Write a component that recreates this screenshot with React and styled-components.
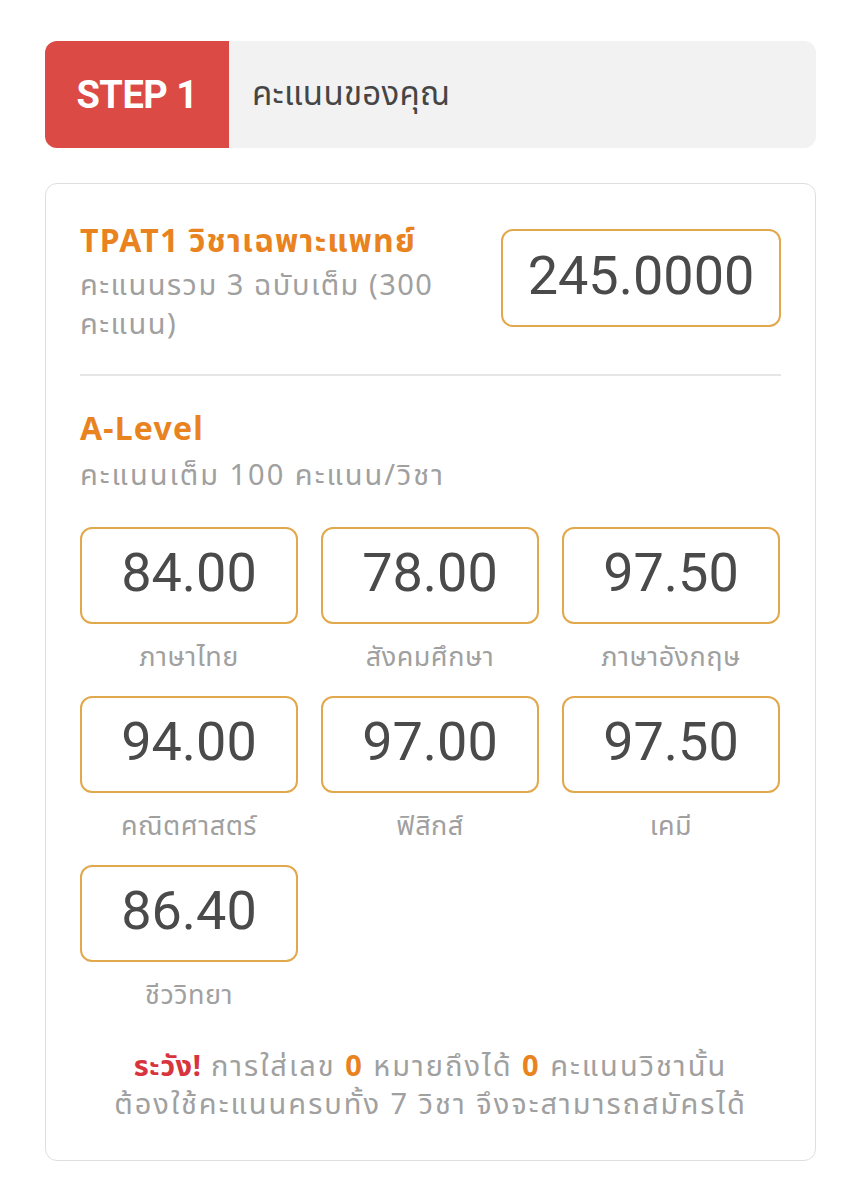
import React from 'react';
import styled, { createGlobalStyle } from 'styled-components';

const GlobalStyle = createGlobalStyle`
  body {
    margin: 0;
    background: #ffffff;
    font-family: "Noto Sans", "Noto Sans Thai", sans-serif;
  }
`;

const Page = styled.div`
  width: 861px;
  padding: 41px 45px 40px;
  box-sizing: border-box;
`;

const StepBar = styled.div`
  display: flex;
  height: 107px;
  border-radius: 12px;
  overflow: hidden;
  background: #f2f2f2;
`;

const StepBadge = styled.div`
  width: 184px;
  display: flex;
  align-items: center;
  justify-content: center;
  background: #dc4a45;
  color: #ffffff;
  font-family: Roboto, sans-serif;
  font-weight: 700;
  font-size: 38px;
  letter-spacing: -0.5px;
`;

const StepTitle = styled.div`
  display: flex;
  align-items: center;
  padding-left: 23px;
  font-size: 33px;
  letter-spacing: 0.3px;
  color: #454545;
`;

const Card = styled.div`
  margin-top: 35px;
  border: 1px solid #dedede;
  border-radius: 12px;
  padding: 36px 34px 38px 34px;
`;

const TpatRow = styled.div`
  display: flex;
  justify-content: space-between;
  align-items: flex-start;
  padding-bottom: 32px;
  border-bottom: 2px solid #e6e6e6;
`;

const TitleBlock = styled.div`
  max-width: 400px;
`;

const SectionTitle = styled.div`
  color: #e8831f;
  font-weight: 700;
  font-size: 32px;
  line-height: 40px;
  letter-spacing: 1.2px;
`;

const SubText = styled.div`
  color: #a0a0a0;
  font-size: 29px;
  line-height: 39px;
  letter-spacing: ${(p) => p.$spacing || 1.5}px;
  margin-top: ${(p) => p.$gap || 4}px;
`;

const ScoreBox = styled.div`
  width: ${(p) => p.$width || 218}px;
  height: ${(p) => p.$height || 97}px;
  box-sizing: border-box;
  border: 2px solid #e2a84c;
  border-radius: 12px;
  display: flex;
  align-items: center;
  justify-content: center;
  padding-bottom: 6px;
  color: #4a4a4a;
  font-family: Roboto, sans-serif;
  font-size: 54px;
  margin-top: ${(p) => p.$top || 0}px;
`;

const ALevel = styled.div`
  padding-top: 32px;
`;

const Grid = styled.div`
  display: grid;
  grid-template-columns: repeat(3, 218px);
  column-gap: 23px;
  row-gap: 22px;
  margin-top: 34px;
`;

const Cell = styled.div`
  display: flex;
  flex-direction: column;
  align-items: center;
`;

const CellLabel = styled.div`
  margin-top: 13px;
  color: #a0a0a0;
  font-size: 27px;
  line-height: 37px;
  letter-spacing: 0.5px;
`;

const Warning = styled.div`
  margin-top: 34px;
  text-align: center;
  color: #a0a0a0;
  font-size: 29px;
  line-height: 38px;
  letter-spacing: 2px;
`;

const Red = styled.span`
  color: #d8343d;
  font-weight: 700;
  letter-spacing: 0.5px;
`;

const Orange = styled.span`
  color: #e8831f;
  font-weight: 700;
`;

const subjects = [
  { score: '84.00', name: 'ภาษาไทย' },
  { score: '78.00', name: 'สังคมศึกษา' },
  { score: '97.50', name: 'ภาษาอังกฤษ' },
  { score: '94.00', name: 'คณิตศาสตร์' },
  { score: '97.00', name: 'ฟิสิกส์' },
  { score: '97.50', name: 'เคมี' },
  { score: '86.40', name: 'ชีววิทยา' },
];

export default function App() {
  return (
    <>
      <GlobalStyle />
      <Page>
        <StepBar>
          <StepBadge>STEP 1</StepBadge>
          <StepTitle>คะแนนของคุณ</StepTitle>
        </StepBar>
        <Card>
          <TpatRow>
            <TitleBlock>
              <SectionTitle>TPAT1 วิชาเฉพาะแพทย์</SectionTitle>
              <SubText>คะแนนรวม 3 ฉบับเต็ม (300 คะแนน)</SubText>
            </TitleBlock>
            <ScoreBox $width={280} $height={98} $top={9}>245.0000</ScoreBox>
          </TpatRow>
          <ALevel>
            <SectionTitle>A-Level</SectionTitle>
            <SubText $gap={6} $spacing={2}>คะแนนเต็ม 100 คะแนน/วิชา</SubText>
            <Grid>
              {subjects.map((s) => (
                <Cell key={s.name}>
                  <ScoreBox>{s.score}</ScoreBox>
                  <CellLabel>{s.name}</CellLabel>
                </Cell>
              ))}
            </Grid>
          </ALevel>
          <Warning>
            <Red>ระวัง!</Red> การใส่เลข <Orange>0</Orange> หมายถึงได้ <Orange>0</Orange> คะแนนวิชานั้น
            <br />
            ต้องใช้คะแนนครบทั้ง 7 วิชา จึงจะสามารถสมัครได้
          </Warning>
        </Card>
      </Page>
    </>
  );
}
